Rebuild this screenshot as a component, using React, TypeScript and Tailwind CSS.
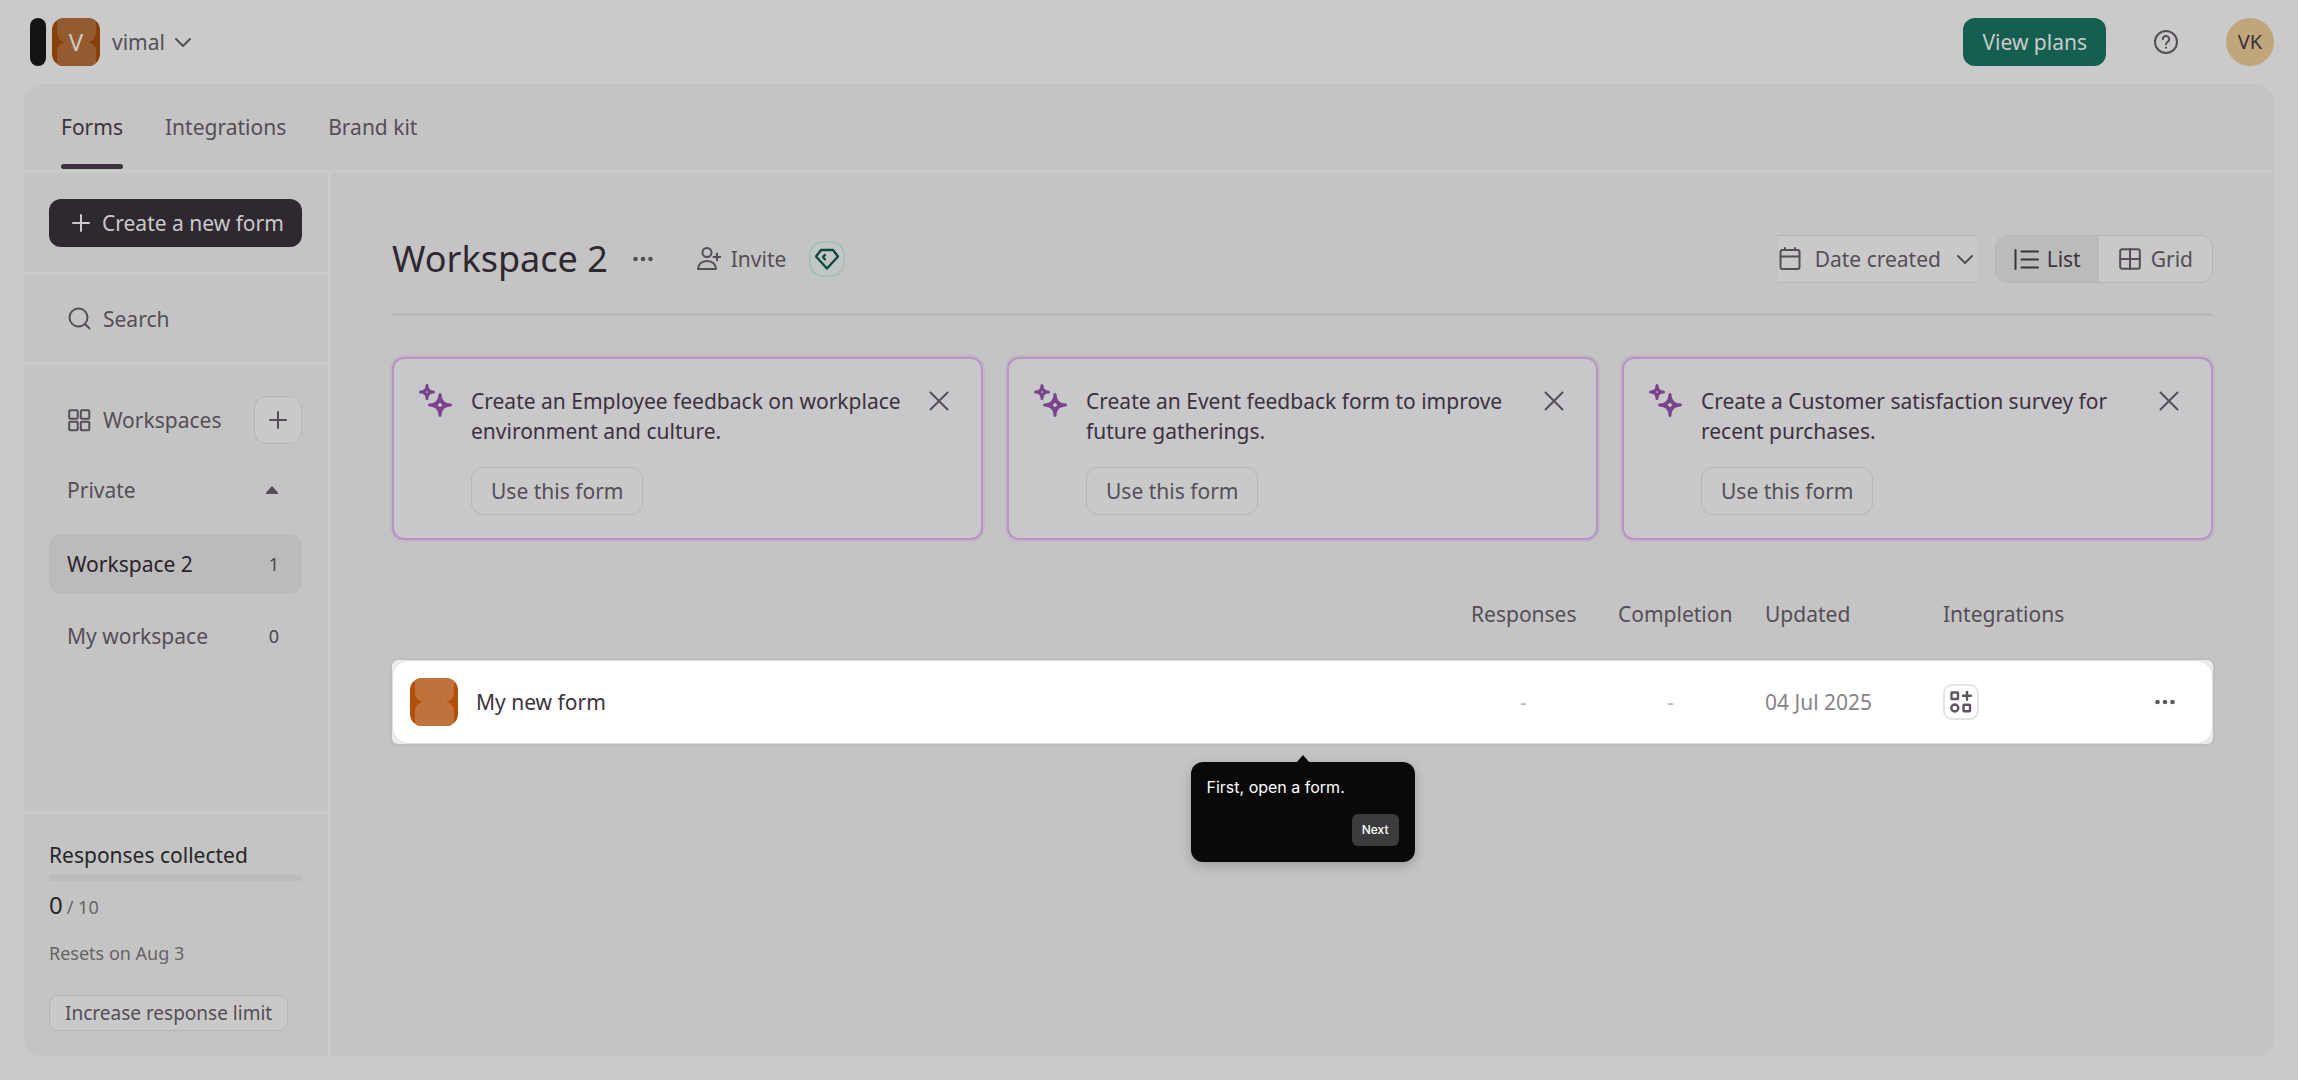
import type { ReactNode } from "react";

type IconProps = { className?: string; size?: number; box?: number; width?: number; children?: ReactNode };

function Icon({ className = "", size = 24, box = 24, width = 2, children }: IconProps) {
  return (
    <svg
      className={`shrink-0 ${className}`}
      width={size}
      height={size}
      viewBox={`0 0 ${box} ${box}`}
      fill="none"
      stroke="currentColor"
      strokeWidth={width}
      strokeLinecap="round"
      strokeLinejoin="round"
      aria-hidden="true"
    >
      {children}
    </svg>
  );
}

const PlusIcon = () => (
  <Icon size={18} box={18}>
    <path d="M9 1v16M1 9h16" />
  </Icon>
);

const ChevronIcon = ({ className = "" }: { className?: string }) => (
  <Icon size={16} box={16} className={className}>
    <path d="M1 5l7 7 7-7" />
  </Icon>
);

const DotsIcon = ({ className = "" }: { className?: string }) => (
  <svg className={className} width="20" height="6" viewBox="0 0 20 6" fill="currentColor" aria-hidden="true">
    <circle cx="2.5" cy="3" r="2.3" />
    <circle cx="10" cy="3" r="2.3" />
    <circle cx="17.5" cy="3" r="2.3" />
  </svg>
);

const SparkleIcon = () => (
  <Icon size={34} box={34} width={3} className="text-[#79448c]">
    <path d="M9 2.500Q9 9 15.500 9Q9 9 9 15.500Q9 9 2.500 9Q9 9 9 2.500Z" />
    <path d="M9 5.500L12.500 9L9 12.500L5.500 9Z" strokeWidth="2" />
    <path d="M22 11.500Q22.200 21.800 32.500 22Q22.200 22.200 22 32.500Q21.800 22.200 11.500 22Q21.800 21.800 22 11.500Z" />
    <path d="M22 18L26 22L22 26L18 22Z" strokeWidth="2.4" fill="#c8c7ca" />
  </Icon>
);

function Tile({ base, overlay, letter }: { base: string; overlay: string; letter?: string }) {
  return (
    <span className="relative flex size-12 shrink-0 items-center justify-center overflow-hidden rounded-xl">
      <svg className="absolute inset-0" width="48" height="48" viewBox="0 0 48 48" aria-hidden="true">
        <rect width="48" height="48" fill={base} />
        <rect x="5" y="-24" width="39" height="48" rx="9" fill={overlay} />
        <rect x="5" y="24" width="39" height="48" rx="9" fill={overlay} />
        <path d="M12 23h25v2H12z" fill={overlay} />
      </svg>
      {letter && <span className="relative text-2xl text-[#cacaca]">{letter}</span>}
    </span>
  );
}

const tabs = ["Forms", "Integrations", "Brand kit"];

const suggestions = [
  "Create an Employee feedback on workplace environment and culture.",
  "Create an Event feedback form to improve future gatherings.",
  "Create a Customer satisfaction survey for recent purchases.",
];

const workspaces = [
  { name: "Workspace 2", count: 1, active: true },
  { name: "My workspace", count: 0, active: false },
];

const columns = "grid grid-cols-[1fr_105px_105px_136px_170px_57px] gap-x-[42px]";

function TopBar() {
  return (
    <header className="flex h-21 items-center px-6">
      <span className="ml-1.5 h-12 w-4 rounded-lg bg-[#141414]" />
      <button type="button" className="ml-1.5 flex items-center">
        <Tile base="#8b3f08" overlay="#945a30" letter="V" />
        <span className="ml-3">vimal</span>
        <ChevronIcon className="ml-2.5" />
      </button>
      <button type="button" className="ml-auto h-12 rounded-xl bg-[#155f51] px-[19px] text-[#cacaca]">
        View plans
      </button>
      <button type="button" aria-label="Help" className="ml-12">
        <Icon>
          <circle cx="12" cy="12" r="11" />
          <path d="M8.800 9.200a3.200 3.200 0 1 1 4.900 2.700c-1 .7-1.700 1.100-1.700 2.300" />
          <path d="M12 17.600v.1" />
        </Icon>
      </button>
      <button type="button" className="ml-12 size-12 rounded-full bg-[#c0a77b] text-xl text-[#3a303c]">
        VK
      </button>
    </header>
  );
}

function Sidebar() {
  return (
    <aside className="flex w-[307px] shrink-0 flex-col border-r-[3px] border-[#cacaca]">
      <div className="border-b-[3px] border-[#cacaca] pt-[26px] pr-[26px] pb-[25px] pl-[25px]">
        <button
          type="button"
          className="flex h-12 w-full items-center gap-3 rounded-xl bg-[#2f2830] pl-[23px] whitespace-nowrap text-[#cacaca]"
        >
          <PlusIcon />
          Create a new form
        </button>
      </div>
      <label className="flex h-[90px] items-center gap-3 border-b-[3px] border-[#cacaca] px-11">
        <Icon size={23} box={23}>
          <circle cx="10.500" cy="10.500" r="9" />
          <path d="M17.500 17.500l4 4" />
        </Icon>
        <input
          type="text"
          aria-label="Search"
          placeholder="Search"
          className="w-full min-w-0 bg-transparent outline-none placeholder:text-[#554e57] placeholder:opacity-100"
        />
      </label>
      <div className="pt-[31px] pr-[26px] pl-[25px]">
        <div className="flex items-center gap-3 pl-[19px]">
          <Icon size={23} box={23}>
            <rect x="1.200" y="1.200" width="8.500" height="8.500" rx="1" />
            <rect x="12.800" y="1.200" width="8.500" height="8.500" rx="1" />
            <rect x="1.200" y="12.800" width="8.500" height="8.500" rx="1" />
            <rect x="12.800" y="12.800" width="8.500" height="8.500" rx="1" />
          </Icon>
          Workspaces
          <button
            type="button"
            aria-label="Add workspace"
            className="ml-auto flex size-12 items-center justify-center rounded-xl border border-[#b7b7b7] bg-[#c9c9c9]"
          >
            <PlusIcon />
          </button>
        </div>
        <button type="button" className="mt-4 flex h-15 w-full items-center justify-between pr-6 pl-[18px]">
          Private
          <svg width="12" height="8" viewBox="0 0 12 8" fill="currentColor" aria-hidden="true">
            <path d="M6 0L12 6.500V8H0V6.500Z" />
          </svg>
        </button>
        <ul className="mt-3.5 flex flex-col gap-3">
          {workspaces.map((w) => (
            <li key={w.name}>
              <a
                href="#"
                className={
                  w.active
                    ? "flex h-15 items-center justify-between rounded-xl bg-[#bbbbbb] pr-[23px] pl-[18px] text-[#2a222c]"
                    : "flex h-15 items-center justify-between rounded-xl pr-[23px] pl-[18px]"
                }
              >
                {w.name}
                <span className="text-lg text-[#4c424e]">{w.count}</span>
              </a>
            </li>
          ))}
        </ul>
      </div>
      <div className="mt-auto border-t-[3px] border-[#cacaca] pt-[26px] pr-[26px] pb-[25px] pl-[25px]">
        <p className="text-[#262627]">Responses collected</p>
        <div className="mt-[5px] h-1.5 rounded-full bg-[#bbbbbb]" />
        <p className="mt-2 flex items-baseline gap-1 text-lg leading-8 text-[#666466]">
          <span className="text-2xl leading-8 text-[#262627]">0</span>/ 10
        </p>
        <p className="mt-4 text-lg text-[#666466]">Resets on Aug 3</p>
        <button
          type="button"
          className="mt-7 h-9 rounded-[9px] border border-[#b5b5b5] bg-[#c9c9c9] px-[15px] text-[19px] whitespace-nowrap"
        >
          Increase response limit
        </button>
      </div>
    </aside>
  );
}

function WorkspaceHeader() {
  return (
    <div className="flex items-center border-b-[3px] border-[#bababa] pb-[30px]">
      <h1 className="text-4xl leading-12 text-[#2f2830]">Workspace 2</h1>
      <button type="button" aria-label="Workspace options" className="ml-[25px]">
        <DotsIcon />
      </button>
      <button type="button" className="ml-11 flex items-center gap-2.5">
        <Icon>
          <circle cx="10" cy="5.500" r="4.500" />
          <path d="M1 22c0-4.600 3.600-8 9-8s9 3.400 9 8z" />
          <path d="M20 6.500v7M16.500 10h7" />
        </Icon>
        Invite
      </button>
      <button
        type="button"
        aria-label="Upgrade plan"
        className="ml-[23px] flex size-9 items-center justify-center rounded-[14px] border-2 border-[#a6bfb8] bg-[#c2c7c5] text-[#0a4a3c]"
      >
        <Icon width={2.4}>
          <path d="M6 3h12l5 6.500L12 21.500 1 9.500z" />
          <path d="M9.800 8l-1.800 2 1.800 2.200" />
        </Icon>
      </button>
      <div className="relative ml-auto flex h-12 items-center border-y border-[#b5b5b5] bg-[#c9c9c9]">
        <Icon className="pointer-events-none absolute left-px">
          <rect x="1.500" y="3" width="19" height="19" rx="2" />
          <path d="M1.500 9.500h19M6 1v2M16 1v2" />
        </Icon>
        <select aria-label="Sort by" className="h-full appearance-none bg-transparent pr-[35px] pl-[37px] outline-none">
          <option>Date created</option>
        </select>
        <ChevronIcon className="pointer-events-none absolute right-1" />
      </div>
      <div className="ml-[18px] flex h-12 overflow-hidden rounded-xl border border-[#b5b5b5] bg-[#c9c9c9]">
        <button type="button" className="flex items-center gap-2 bg-[#bbbbbb] px-[18px] text-[#3c323e]">
          <Icon size={25} box={25}>
            <path d="M1.500 3v19" />
            <path d="M7.500 4.500h16.500M7.500 12.500h16.500M7.500 20.500h16.500" />
          </Icon>
          List
        </button>
        <button type="button" className="flex items-center gap-2.5 pr-[19px] pl-5">
          <Icon size={22} box={22}>
            <rect x="1.200" y="1.200" width="19.600" height="19.600" rx="2" />
            <path d="M11 1v20M1 11h20" />
          </Icon>
          Grid
        </button>
      </div>
    </div>
  );
}

function Suggestion({ text }: { text: string }) {
  return (
    <article className="flex rounded-xl border-2 border-[#b695c6] bg-[#c8c7ca] pt-6 pr-8 pb-[23px] pl-6 shadow-[0_0_0_2px_#bfb8c2]">
      <SparkleIcon />
      <div className="ml-[19px] grow">
        <p className="pt-[3px] leading-[30px] text-[#3c323e]">{text}</p>
        <button type="button" className="mt-[21px] h-12 rounded-xl border border-[#b5b5b5] bg-[#c9c9c9] px-[19px]">
          Use this form
        </button>
      </div>
      <button type="button" aria-label="Dismiss" className="mt-2 ml-6 self-start">
        <Icon size={20} box={20}>
          <path d="M1.500 1.500l17 17M18.500 1.500l-17 17" />
        </Icon>
      </button>
    </article>
  );
}

function FormsTable() {
  return (
    <div className="relative mt-[59px]">
      <table className="block">
        <thead className="block">
          <tr className={`${columns} px-px text-left`}>
            <th aria-label="Name" />
            <th className="font-normal">Responses</th>
            <th className="font-normal">Completion</th>
            <th className="font-normal">Updated</th>
            <th className="font-normal">Integrations</th>
            <th aria-label="Actions" />
          </tr>
        </thead>
        <tbody className="mt-[31px] block rounded-md bg-[#ececec] shadow-[0_0_0_2px_#bdbdbd]">
          <tr className={`${columns} h-[84px] items-center rounded-2xl border border-[#dddddd] bg-white text-[#88838a]`}>
            <td className="flex items-center gap-[18px] pl-[17px] text-[#3c323e]">
              <Tile base="#b25009" overlay="#c0723c" />
              My new form
            </td>
            <td className="text-center text-[#b9b6ba]">-</td>
            <td className="text-center text-[#b9b6ba]">-</td>
            <td className="whitespace-nowrap">04 Jul 2025</td>
            <td>
              <button
                type="button"
                aria-label="Add integration"
                className="flex size-9 items-center justify-center rounded-[9px] border-2 border-[#e4e3e5] text-[#5e5560]"
              >
                <Icon size={22} box={22} width={2.4}>
                  <rect x="1.500" y="1.500" width="6.500" height="6.500" rx="0.500" />
                  <path d="M17 0.800v8M13 4.800h8" />
                  <circle cx="4.800" cy="17" r="3.500" />
                  <rect x="13.500" y="13.800" width="6.500" height="6.500" rx="0.500" />
                </Icon>
              </button>
            </td>
            <td>
              <button type="button" aria-label="Form options" className="flex h-9 items-center text-[#5e5560]">
                <DotsIcon />
              </button>
            </td>
          </tr>
        </tbody>
      </table>
      <div
        role="dialog"
        aria-label="Tour step"
        className="absolute top-full left-1/2 mt-[18px] flex w-56 -translate-x-1/2 flex-col rounded-xl bg-[#090909] p-4 font-['Inter',sans-serif] text-white shadow-[0_4px_12px_rgba(0,0,0,0.2)]"
      >
        <svg className="absolute -top-[7px] left-1/2 -translate-x-1/2" width="14" height="8" viewBox="0 0 14 8" aria-hidden="true">
          <path d="M7 0l7 8H0z" fill="#090909" />
        </svg>
        <p className="text-base leading-[18px]">First, open a form.</p>
        <button type="button" className="mt-[18px] h-8 self-end rounded-md bg-[#3b3b3b] px-2.5 text-xs font-medium">
          Next
        </button>
      </div>
    </div>
  );
}

export default function App() {
  return (
    <div className="flex min-h-screen flex-col bg-[#cacaca] font-['Noto_Sans',sans-serif] text-[21px] leading-[30px] text-[#554e57]">
      <TopBar />
      <div className="mx-6 mb-6 flex grow flex-col overflow-hidden rounded-[18px] bg-[#c4c4c4]">
        <nav className="flex h-[89px] gap-[42px] border-b-[3px] border-[#cacaca] pl-[37px]">
          {tabs.map((tab, i) => (
            <a
              key={tab}
              href="#"
              className={i === 0 ? "relative flex items-center text-[#3c323e]" : "relative flex items-center"}
            >
              {tab}
              {i === 0 && <span className="absolute inset-x-0 bottom-px h-[5px] rounded-full bg-[#3c323e]" />}
            </a>
          ))}
        </nav>
        <div className="flex grow">
          <Sidebar />
          <main className="grow px-[61px] pt-[62px]">
            <WorkspaceHeader />
            <section className="mt-[41px] grid grid-cols-3 gap-6">
              {suggestions.map((s) => (
                <Suggestion key={s} text={s} />
              ))}
            </section>
            <FormsTable />
          </main>
        </div>
      </div>
    </div>
  );
}
